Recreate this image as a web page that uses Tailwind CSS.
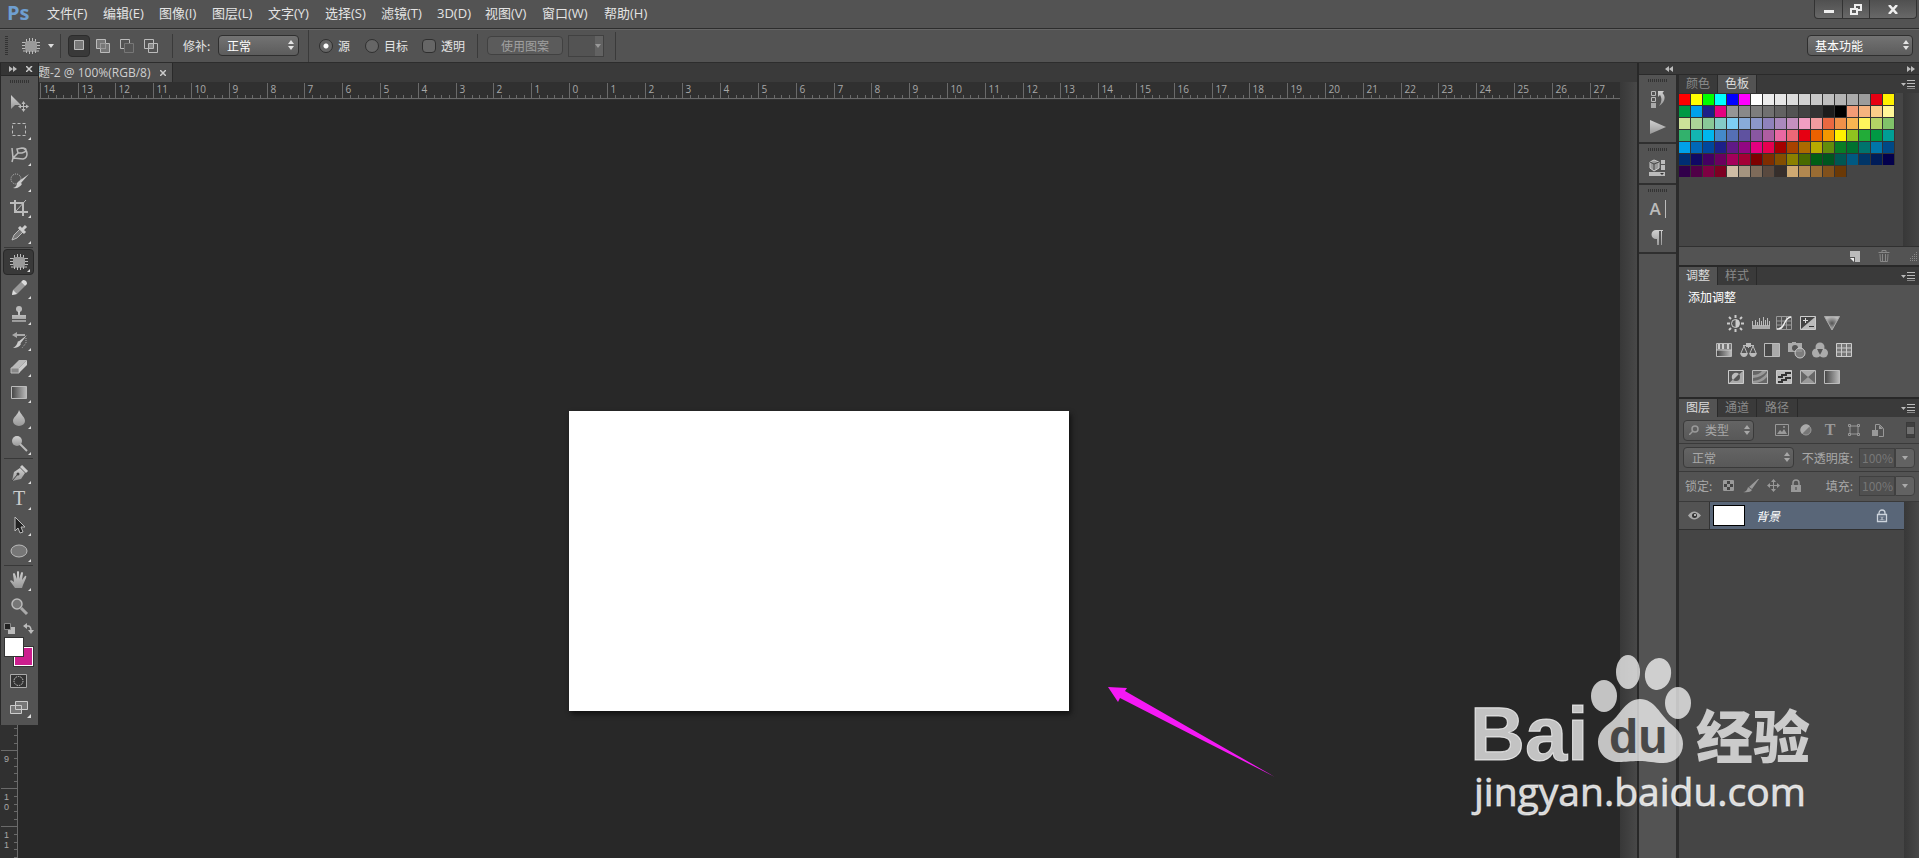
<!DOCTYPE html>
<html lang="zh-CN">
<head>
<meta charset="utf-8">
<title>未标题-2 @ 100%(RGB/8)</title>
<script src="https://cdn.jsdelivr.net/npm/@tailwindcss/browser@4"></script>
</head>
<body class="flex h-screen flex-col overflow-hidden bg-[#282828] font-['Open_Sans','Noto_Sans_CJK_SC',sans-serif] text-xs text-[#e4e4e4]">
<svg width="0" height="0" class="absolute" aria-hidden="true">
  <defs>
    <linearGradient id="g" x1="0" y1="0" x2="0" y2="1"><stop offset="0" stop-color="#d0d0d0"/><stop offset="1" stop-color="#989898"/></linearGradient>
    <linearGradient id="gh" x1="0" y1="0" x2="1" y2="0"><stop offset="0" stop-color="#444"/><stop offset="1" stop-color="#bbb"/></linearGradient>
    <radialGradient id="gr"><stop offset="0" stop-color="#555"/><stop offset="1" stop-color="#bbb"/></radialGradient>
    <pattern id="grip" width="2" height="4" patternUnits="userSpaceOnUse"><path d="M0 0h1v4h-1z" fill="#333"/></pattern>
    <symbol id="updown" viewBox="0 0 6 10"><path d="M0 4 3 0l3 4zM0 6l3 4 3-4z" fill="currentColor"/></symbol>
    <symbol id="menu" viewBox="0 0 14 9"><path d="M0 3h5L2.500 6z" fill="#bbb"/><path d="M6 .5h8M6 3.500h8M6 6.500h8" stroke="#bbb"/><path d="M6 8.500h8" stroke="#888"/></symbol>
    <symbol id="patch" viewBox="0 0 18 16"><path d="M4.500 1v14M7.500 0v16M10.500 0v16M13.500 1v14M0 4.500h18M0 7.500h18M0 10.500h18M1 13h16" stroke="#bbb"/><rect x="3" y="3" width="12" height="10" rx="3" fill="#999"/></symbol>
    <symbol id="corner" viewBox="0 0 4 4"><path d="M4 0v4H0z" fill="#ddd"/></symbol>
    <symbol id="lock" viewBox="0 0 12 14"><path d="M3 6V4a3 3 0 0 1 6 0v2" fill="none" stroke="currentColor" stroke-width="1.500"/><path d="M1 6h10v7H1z" fill="currentColor"/><path d="M5.500 8h1v3h-1z" fill="#444"/></symbol>
    <symbol id="lock-outline" viewBox="0 0 12 14"><path d="M3 5.500V4a3 3 0 0 1 6 0v1.500M1.500 5.500h9v7h-9z" fill="none" stroke="currentColor" stroke-width="1.300"/><path d="M3.500 8h5M3.500 10.500h5" stroke="currentColor" stroke-opacity=".4"/><path d="M5.500 8h1v3h-1z" fill="currentColor"/></symbol>
  </defs>
</svg>

<header class="flex h-7 shrink-0 items-stretch bg-[#535353] pl-[7px]">
  <div class="w-[40px] text-[20px] leading-[26px] font-bold text-[#6f9fd0]">Ps</div>
  <nav class="flex items-center gap-4 text-[13px] whitespace-nowrap">
    <button class="w-10 text-left">文件(F)</button><button class="w-10 text-left">编辑(E)</button><button class="w-[37px] text-left">图像(I)</button><button class="w-10 text-left">图层(L)</button><button class="w-[41px] text-left">文字(Y)</button><button class="w-10 text-left">选择(S)</button><button class="w-10 text-left">滤镜(T)</button><button class="w-8 text-left">3D(D)</button><button class="w-[41px] text-left">视图(V)</button><button class="w-[46px] text-left">窗口(W)</button><button class="w-11 text-left">帮助(H)</button>
  </nav>
  <div class="mr-[2px] ml-auto flex h-[19px] divide-x divide-[#333] rounded-b-sm border border-t-0 border-[#333] bg-linear-to-b from-[#505050] to-[#686868]">
    <button aria-label="最小化" class="flex w-[28px] items-center justify-center"><svg width="10" height="10"><path d="M0 6h10v3H0z" fill="#eee"/></svg></button>
    <button aria-label="还原" class="flex w-[27px] items-center justify-center"><svg width="12" height="11" fill="none" stroke="#eee" stroke-width="2"><path d="M5 4V1h6v5H8"/><path d="M1 5h6v5H1z"/></svg></button>
    <button aria-label="关闭" class="flex w-[46px] items-center justify-center"><svg width="10" height="9"><path d="m1 0 8 9M9 0 1 9" stroke="#eee" stroke-width="2.500"/></svg></button>
  </div>
</header>

<section class="flex h-[35px] shrink-0 items-center border-t border-b border-t-[#2d2d2d] border-b-[#2d2d2d] bg-[#535353] pl-[5px] font-['Noto_Sans_CJK_SC',sans-serif] shadow-[inset_0_1px_0_#666]">
  <svg width="3" height="20"><path d="M1.500 0v20" stroke="#333" stroke-width="3" stroke-dasharray="1 1"/></svg>
  <button aria-label="修补工具" class="ml-[14px] flex items-center gap-2"><svg width="18" height="16"><use href="#patch"/></svg><svg width="6" height="4"><path d="M0 0h6L3 4z" fill="#ddd"/></svg></button>
  <i class="ml-[6px] h-6 w-px bg-[#3a3a3a]"></i>
  <div class="ml-[7px] flex items-center">
    <button aria-label="新选区" class="flex h-[22px] w-[22px] items-center justify-center rounded-sm border border-[#2c2c2c] bg-[#393939]"><svg width="11" height="11"><path d="M.5.5h9v9h-9z" fill="#777" stroke="#bbb"/></svg></button>
    <button aria-label="添加到选区" class="ml-[6px]"><svg width="14" height="14"><path d="M.5.5h9v9h-9zM4.500 4.500h9v9h-9z" fill="#777" stroke="#bbb"/><path d="M4.500 9.500v-5h5v5z" fill="none" stroke="#999"/></svg></button>
    <button aria-label="从选区减去" class="ml-[10px]"><svg width="14" height="14"><path d="M4.500 4.500h9v9h-9z" fill="#555" stroke="#777"/><path d="M4 9.500H.5v-9h9V4" fill="none" stroke="#bbb"/></svg></button>
    <button aria-label="与选区交叉" class="ml-[10px]"><svg width="14" height="14"><path d="M5 5h4v4H5z" fill="#888"/><path d="M.5.500h9v9h-9zM4.500 4.500h9v9h-9z" fill="none" stroke="#bbb"/></svg></button>
  </div>
  <i class="ml-[14px] h-6 w-px bg-[#3a3a3a]"></i>
  <label for="patch-mode" class="ml-[10px] w-[35px]">修补:</label>
  <div class="relative"><select id="patch-mode" class="h-[21px] w-[81px] appearance-none rounded-sm border border-[#2f2f2f] bg-linear-to-b from-[#737373] to-[#5c5c5c] pl-2 text-xs leading-4 text-white"><option>正常</option></select><svg class="pointer-events-none absolute top-[5px] right-[5px]" width="6" height="10"><use href="#updown"/></svg></div>
  <i class="ml-[9px] h-8 w-px bg-[#3a3a3a]"></i>
  <label class="ml-[10px] flex items-center gap-[5px]"><input type="radio" name="patch" checked class="h-[14px] w-[14px] appearance-none rounded-full border border-[#2f2f2f] bg-[radial-gradient(circle,#fff_2px,#666_3px)]">源</label>
  <label class="ml-[15px] flex items-center gap-[5px]"><input type="radio" name="patch" class="h-[14px] w-[14px] appearance-none rounded-full border border-[#2f2f2f] bg-[#666]">目标</label>
  <label class="ml-[14px] flex items-center gap-[5px]"><input type="checkbox" class="h-[14px] w-[14px] appearance-none rounded-sm border border-[#2f2f2f] bg-[#666]">透明</label>
  <i class="ml-[12px] h-6 w-px bg-[#3a3a3a]"></i>
  <button disabled class="ml-[9px] h-[19px] w-[76px] rounded-sm border border-[#414141] bg-[#5b5b5b] leading-4 text-[#a0a0a0]">使用图案</button>
  <button disabled aria-label="图案" class="ml-[5px] flex h-[22px] w-[36px] border border-[#414141]"><span class="ml-auto flex h-full w-2 items-center bg-[#626262]"><svg width="6" height="4"><path d="M0 0h6L3 4z" fill="#999"/></svg></span></button>
  <i class="ml-[11px] h-7 w-px bg-[#3a3a3a]"></i>
  <div class="relative mr-[6px] ml-auto"><select aria-label="工作区" class="h-[21px] w-[106px] appearance-none rounded-sm border border-[#2f2f2f] bg-linear-to-b from-[#737373] to-[#5c5c5c] pl-[7px] text-xs leading-4 text-white"><option>基本功能</option></select><svg class="pointer-events-none absolute top-[5px] right-[4px]" width="6" height="10"><use href="#updown"/></svg></div>
</section>

<main class="relative flex min-h-0 flex-1">
  <section class="flex min-w-0 flex-1 flex-col">
    <div class="flex h-[19px] shrink-0 bg-[#3a3a3a] pl-[38px]">
      <div class="flex h-[19px] w-[135px] items-center justify-between overflow-hidden border-r border-[#2a2a2a] bg-[#4f4f4f] pr-[6px] leading-[19px] whitespace-nowrap text-[#cfcfcf]"><span>题-2 @ 100%(RGB/8)</span><button aria-label="关闭文档"><svg width="6" height="6"><path d="m0 0 6 6M6 0 0 6" stroke="#ccc" stroke-width="1.500"/></svg></button></div>
    </div>
    <div class="flex min-h-0 flex-1">
      <div class="flex min-w-0 flex-1 flex-col">
        <svg id="hruler" class="h-[18px] w-full shrink-0 bg-[#303030]"></svg>
        <div class="relative min-h-0 flex-1">
          <svg id="vruler" class="h-full w-[18px] bg-[#303030]"></svg>
          <div class="absolute top-[311px] left-[569px] h-[300px] w-[500px] bg-white shadow-[2px_3px_5px_#111]"></div>
          <svg class="absolute top-[586px] left-[1107px]" width="170" height="92" role="img" aria-label="箭头"><path d="M1 1 20 2 18 5 168 91 95 54 13 12 11 16z" fill="#f519f5"/></svg>
        </div>
      </div>
      <div class="w-[17px] bg-linear-to-r from-[#383838] to-[#484848]"></div>
    </div>
  </section>

  <aside class="flex w-[282px] shrink-0 flex-col border-l-2 border-[#282828] bg-[#3a3a3a]">
    <div class="flex h-3 shrink-0 items-center justify-between border-b border-[#2a2a2a] pr-1 pl-[26px]">
      <svg width="8" height="6"><path d="M4 0v6L0 3zM8 0v6L4 3z" fill="#bbb"/></svg><svg width="8" height="6"><path d="M0 0v6l4-3zM4 0v6l4-3z" fill="#bbb"/></svg>
    </div>
    <div class="flex min-h-0 flex-1">
      <div class="flex w-[40px] shrink-0 flex-col items-stretch border-r-3 border-[#2b2b2b] bg-[#535353]">
        <div class="flex h-[69px] flex-col items-center border-b-2 border-[#2f2f2f] pt-1">
          <svg width="20" height="4"><rect width="20" height="3" fill="url(#grip)"/></svg>
          <button aria-label="历史记录" class="mt-[7px]"><svg width="16" height="18"><path d="M1.500 1.500h4v4h-4zM1.500 7.500h4v4h-4z" fill="none" stroke="#bbb"/><path d="M1 13h5v5H1z" fill="#aaa"/><path d="M8 1h6l-1.500 2c4 4 2 10-3.500 13 3-4 3-8 1-11L8 7z" fill="url(#g)"/></svg></button>
          <button aria-label="动作" class="mt-3"><svg width="16" height="14"><path d="m0 0 16 7-16 7z" fill="url(#g)"/></svg></button>
        </div>
        <div class="flex h-[41px] flex-col items-center border-b-2 border-[#2f2f2f] pt-1">
          <svg width="20" height="4"><rect width="20" height="3" fill="url(#grip)"/></svg>
          <button aria-label="3D 属性" class="mt-[7px]"><svg width="17" height="18"><path d="m1 3 4-2 5 2v6l-5 3-4-3z" fill="#999" stroke="#ccc"/><path d="m1 3 4 2 5-2M5 5v6" fill="none" stroke="#444"/><path d="M12 1h4v4h-4zM12 6h4v5h-4zM0 13h16v4H0z" fill="#bbb"/><path d="M11 14h4l-2 2z" fill="#333"/></svg></button>
        </div>
        <div class="flex h-[69px] flex-col items-center border-b-2 border-[#2f2f2f] pt-1">
          <svg width="20" height="4"><rect width="20" height="3" fill="url(#grip)"/></svg>
          <button aria-label="字符" class="mt-[7px] flex items-center border-[#bbb] text-[17px] leading-[18px] font-semibold text-[#bbb]">A<i class="ml-1 h-[18px] w-px bg-[#bbb]"></i></button>
          <button aria-label="段落" class="mt-3"><svg width="14" height="15"><path d="M5 0h7v1h-1v14h-1V1H8v14H6V9H5a4.500 4.500 0 0 1 0-9z" fill="url(#g)"/></svg></button>
        </div>
      </div>

      <div class="flex min-w-0 flex-1 flex-col font-['Noto_Sans_CJK_SC',sans-serif]">
        <section class="flex h-[192px] shrink-0 flex-col border-b-2 border-[#282828]">
          <div class="flex h-[18px] shrink-0 items-stretch pr-1 leading-4 text-[#8a8a8a]">
            <button class="w-[39px] border-r border-[#2a2a2a] pb-[2px]">颜色</button><button class="w-[39px] border-r border-[#2a2a2a] bg-[#535353] pb-[2px] text-[#ddd]">色板</button>
            <button aria-label="面板菜单" class="ml-auto"><svg width="14" height="9"><use href="#menu"/></svg></button>
          </div>
          <div class="flex min-h-0 flex-1">
            <div id="swatches" class="grid flex-1 auto-rows-[12px] grid-cols-[repeat(18,12px)] bg-[#454545]"></div>
            <div class="w-4 bg-linear-to-r from-[#383838] to-[#444]"></div>
          </div>
          <div class="flex h-[19px] shrink-0 items-center justify-end gap-[18px] border-t border-[#303030] bg-[#535353] pr-[2px]">
            <button aria-label="新建色板"><svg width="10" height="11"><path d="M0 0h10v11H5V6H0z" fill="#bbb"/><path d="M0 7h4v4z" fill="#eee"/></svg></button>
            <button aria-label="删除色板"><svg width="12" height="12" fill="none" stroke="#888"><path d="M.5 2.500h11M4 2V.5h4V2M2 4l.5 7.500h7L10 4M4.500 4v7M7.500 4v7"/></svg></button>
            <svg width="9" height="9"><path d="M8.500 0v9M6.500 2v7M4.500 4v5M2.500 6v3" stroke="#888" stroke-dasharray="1 1"/></svg>
          </div>
        </section>

        <section class="flex h-[132px] shrink-0 flex-col border-b-2 border-[#282828] bg-[#535353]">
          <div class="flex h-[18px] shrink-0 items-stretch bg-[#3a3a3a] pr-1 leading-4 text-[#8a8a8a]">
            <button class="w-[39px] border-r border-[#2a2a2a] bg-[#535353] pb-[2px] text-[#ddd]">调整</button><button class="w-[39px] border-r border-[#2a2a2a] pb-[2px]">样式</button>
            <button aria-label="面板菜单" class="ml-auto"><svg width="14" height="9"><use href="#menu"/></svg></button>
          </div>
          <h2 class="mt-[3px] pl-[9px] leading-[18px] text-white">添加调整</h2>
          <div class="mt-2 ml-[48px] flex h-[18px] items-center gap-2">
            <button aria-label="亮度/对比度"><svg width="17" height="17"><g stroke="#ccc" stroke-width="2"><path d="M8.500 0v3M8.500 14v3M0 8.500h3M14 8.500h3M2 2l2 2M13 13l2 2M2 15l2-2M13 4l2-2"/></g><circle cx="8.500" cy="8.500" r="4" fill="#555" stroke="#ccc"/><path d="M8.500 4.500a4 4 0 0 1 0 8z" fill="#ccc"/></svg></button>
            <button aria-label="色阶"><svg width="18" height="16"><path d="M0 10h18v4H0z" fill="#aaa"/><path d="M.5 6v5M3.500 5v6M5.500 7v4M7.500 3v8M9.500 6v5M11.500 2v9M13.500 5v6M15.500 3v8M17.500 6v5" stroke="#bbb"/></svg></button>
            <button aria-label="曲线" class="-ml-[2px]"><svg width="16" height="16" fill="none"><path d="M.5 1.500h15v13H.5zM5.500 2v12M10.500 2v12M1 6h14M1 10h14" stroke="#999"/><path d="M1 14c9 0 6-11 14-12" stroke="#eee" stroke-width="1.500"/></svg></button>
            <button aria-label="曝光度"><svg width="16" height="16"><path d="M.5 1.500h15v13H.5z" fill="#bbb" stroke="#ccc"/><path d="M1 14V2h14z" fill="#444"/><path d="M3 5.500h5M5.500 3v5" stroke="#ddd"/><path d="M9 11.500h5" stroke="#333"/></svg></button>
            <button aria-label="自然饱和度"><svg width="16" height="16"><path d="M.5 1.500h15L8 15z" fill="url(#gr)" stroke="#aaa"/></svg></button>
          </div>
          <div class="mt-[9px] ml-[37px] flex h-[18px] items-center gap-2">
            <button aria-label="色相/饱和度"><svg width="16" height="16"><path d="M.5 1.500h15v13H.5z" fill="#777" stroke="#bbb"/><path d="M3 2v5M7 2v5M12 2v5" stroke="#ccc" stroke-width="2"/><path d="M1 8h14v6H1z" fill="url(#gh)"/><path d="M0 8h16" stroke="#ccc"/></svg></button>
            <button aria-label="色彩平衡"><svg width="17" height="16"><path d="M8.500 1v5M3 3.500h11M4 4l-3 7M4 4l3 7M13 4l-3 7M13 4l3 7" fill="none" stroke="#bbb"/><path d="M0 11h8q-1 4-4 4t-4-4zM9 11h8q-1 4-4 4t-4-4zM6 1h5v4H6z" fill="#bbb"/></svg></button>
            <button aria-label="黑白" class="-ml-[1px]"><svg width="16" height="16"><path d="M.5 1.500h15v13H.5z" fill="#aaa" stroke="#bbb"/><path d="M1 2h7v12H1z" fill="#484848"/></svg></button>
            <button aria-label="照片滤镜"><svg width="18" height="17"><path d="M0 1h4V0h4v1h6v9H0z" fill="#aaa"/><circle cx="7" cy="6" r="3" fill="#555"/><circle cx="12" cy="11" r="5" fill="#888" fill-opacity=".8" stroke="#ccc"/></svg></button>
            <button aria-label="通道混合器" class="-ml-[2px]"><svg width="16" height="16" fill="#bbb" fill-opacity=".85"><circle cx="8" cy="5" r="4.500"/><circle cx="4.500" cy="11" r="4.500"/><circle cx="11.500" cy="11" r="4.500"/><path d="M5 7h6l-3 6z" fill="#444"/></svg></button>
            <button aria-label="颜色查找"><svg width="16" height="16"><path d="M.5 1.500h15v13H.5z" fill="#777" stroke="#ccc"/><path d="M5.500 2v12M10.500 2v12M1 6h14M1 10h14" stroke="#ccc"/></svg></button>
          </div>
          <div class="mt-[9px] ml-[49px] flex h-[18px] items-center gap-2">
            <button aria-label="反相"><svg width="16" height="16"><path d="M.5 1.500h15v13H.5z" fill="#aaa" stroke="#ccc"/><path d="M1 14V2h14z" fill="#555"/><circle cx="8" cy="8" r="4" fill="#555"/><path d="M5 11a4 4 0 0 1 6-6z" fill="#bbb"/></svg></button>
            <button aria-label="色调分离"><svg width="16" height="16"><path d="M.5 1.500h15v13H.5z" fill="#666" stroke="#bbb"/><path d="M1 6q6 0 9-4h5Q10 8 1 9zM1 12q9-1 14-8v4q-5 6-14 6z" fill="#999"/></svg></button>
            <button aria-label="阈值"><svg width="16" height="16"><path d="M.5 1.500h15v13H.5z" fill="#bbb" stroke="#ccc"/><path d="M2 7h3V5h4V3h6v2h-4v2H7v2H2zM2 12h3v-2h4V8h6v2h-4v2H7v2H2z" fill="#333"/></svg></button>
            <button aria-label="可选颜色"><svg width="16" height="16"><path d="M.5 1.500h15v13H.5z" fill="#666" stroke="#bbb"/><path d="m1 2 7 6 7-6z" fill="#aaa"/><path d="m1 14 7-6 7 6z" fill="#999"/></svg></button>
            <button aria-label="渐变映射"><svg width="16" height="16"><path d="M.5 1.500h15v13H.5z" fill="url(#gh)" stroke="#bbb"/></svg></button>
          </div>
        </section>

        <section class="flex min-h-0 flex-1 flex-col text-[#a8a8a8]">
          <div class="flex h-[18px] shrink-0 items-stretch pr-1 leading-4 text-[#8a8a8a]">
            <button class="w-[39px] border-r border-[#2a2a2a] bg-[#535353] pb-[2px] text-[#ddd]">图层</button><button class="w-[39px] border-r border-[#2a2a2a] pb-[2px]">通道</button><button class="w-[41px] border-r border-[#2a2a2a] pb-[2px]">路径</button>
            <button aria-label="面板菜单" class="ml-auto"><svg width="14" height="9"><use href="#menu"/></svg></button>
          </div>
          <div class="flex h-[27px] shrink-0 items-center border-b border-[#3a3a3a] bg-[#535353] pr-1 pl-1">
            <div class="relative"><select aria-label="滤镜类型" class="h-[21px] w-[71px] appearance-none rounded-sm border border-[#3a3a3a] bg-linear-to-b from-[#646464] to-[#585858] pl-[21px] leading-4"><option>类型</option></select><svg class="pointer-events-none absolute top-[5px] left-[6px]" width="10" height="10" fill="none" stroke="#999" stroke-width="1.500"><circle cx="6" cy="4" r="3"/><path d="M4 6 0 10"/></svg><svg class="pointer-events-none absolute top-[5px] right-[4px]" width="6" height="10"><use href="#updown"/></svg></div>
            <button aria-label="像素图层" class="ml-[21px]"><svg width="14" height="12"><path d="M.5.500h13v11H.5z" fill="none" stroke="#999"/><path d="m2 10 3-4 2 2 2-3 3 5z" fill="#999"/><circle cx="9" cy="3" r="1" fill="#999"/></svg></button>
            <button aria-label="调整图层" class="ml-[11px]"><svg width="12" height="12"><circle cx="6" cy="6" r="5" fill="#777" stroke="#999"/><path d="M2 10 10 2A5.500 5.500 0 0 0 2 10z" fill="#aaa"/></svg></button>
            <button aria-label="文字图层" class="ml-3 w-3 font-['Liberation_Serif',serif] text-[16px] leading-4 font-bold text-[#999]">T</button>
            <button aria-label="形状图层" class="ml-3"><svg width="12" height="12" fill="none" stroke="#999"><path d="M2 2h8v8H2z"/><path d="M.5.500h2v2h-2zM9.500.500h2v2h-2zM.5 9.500h2v2h-2zM9.500 9.500h2v2h-2z" fill="#555"/></svg></button>
            <button aria-label="智能对象" class="ml-3"><svg width="12" height="13"><path d="M3.500 6V.5h4l4 4v8H7" fill="none" stroke="#999"/><path d="M0 6h6v6H0zM7 1v4h4z" fill="#999"/></svg></button>
            <button aria-label="滤镜开关" class="ml-auto h-4 w-[9px] border border-[#3a3a3a] bg-[#404040]"><span class="block h-[7px] bg-[#707070]"></span></button>
          </div>
          <div class="flex h-[28px] shrink-0 items-center border-b border-[#3a3a3a] bg-[#535353] pr-1 pl-1">
            <div class="relative"><select aria-label="混合模式" class="h-[21px] w-[111px] appearance-none rounded-sm border border-[#3a3a3a] bg-linear-to-b from-[#646464] to-[#585858] pl-2 leading-4"><option>正常</option></select><svg class="pointer-events-none absolute top-[5px] right-[4px]" width="6" height="10"><use href="#updown"/></svg></div>
            <label for="opacity" class="ml-auto pr-[6px]">不透明度:</label>
            <input id="opacity" value="100%" class="h-5 w-[36px] border border-[#404040] bg-[#505050] pl-[2px] text-[#777]"><button aria-label="不透明度滑块" class="flex h-5 w-5 items-center justify-center rounded-r-sm border border-[#404040] bg-[#626262]"><svg width="6" height="4"><path d="M0 0h6L3 4z" fill="#aaa"/></svg></button>
          </div>
          <div class="flex h-[30px] shrink-0 items-center border-b border-[#3a3a3a] bg-[#535353] pr-1 pb-[2px] pl-[6px]">
            <span>锁定:</span>
            <button aria-label="锁定透明像素" class="ml-[11px]"><svg width="11" height="11"><path d="M.5.500h10v10H.5z" fill="#444" stroke="#999"/><path d="M1 1h3v3H1zM7 1h3v3H7zM4 4h3v3H4zM1 7h3v3H1zM7 7h3v3H7z" fill="#999"/></svg></button>
            <button aria-label="锁定图像像素" class="ml-[9px]"><svg width="16" height="14"><path d="M15 0h1L9 10 6 8zM5 8l4 3q-2 3-9 2 4 0 5-5z" fill="#999"/></svg></button>
            <button aria-label="锁定位置" class="ml-[8px]"><svg width="13" height="13"><path d="M6.500 2v9M2 6.500h9" stroke="#999"/><path d="m6.500 0 2.500 3H4zM6.500 13 4 10h5zM0 6.500 3 4v5zM13 6.500 10 4v5z" fill="#999"/></svg></button>
            <button aria-label="锁定全部" class="ml-[10px] text-[#999]"><svg width="12" height="14"><use href="#lock"/></svg></button>
            <label for="fill" class="ml-auto pr-[6px]">填充:</label>
            <input id="fill" value="100%" class="h-5 w-[36px] border border-[#404040] bg-[#505050] pl-[2px] text-[#777]"><button aria-label="填充滑块" class="flex h-5 w-5 items-center justify-center rounded-r-sm border border-[#404040] bg-[#626262]"><svg width="6" height="4"><path d="M0 0h6L3 4z" fill="#aaa"/></svg></button>
          </div>
          <div class="flex min-h-0 flex-1">
            <div class="flex-1 bg-[#454545]">
              <div class="flex h-7 items-stretch border-b border-[#303030] bg-[#596678]">
                <button aria-label="可见性" class="flex w-[31px] items-center justify-center border-r border-[#333] bg-[#535353]"><svg width="13" height="9"><path d="M0 4.500q6-8 13 0-7 8-13 0z" fill="#aaa"/><circle cx="6.500" cy="4.500" r="2.500" fill="#333"/><circle cx="7" cy="4" r="1" fill="#ddd"/></svg></button>
                <span class="my-[3px] ml-[3px] w-8 border border-black bg-white"></span>
                <span class="ml-[11px] self-center text-white italic">背景</span>
                <svg class="mr-4 ml-auto self-center text-[#ccd3dc]" width="12" height="14"><use href="#lock-outline"/></svg>
              </div>
            </div>
            <div class="w-[15px] bg-linear-to-r from-[#383838] to-[#484848]"></div>
          </div>
        </section>
      </div>
    </div>
  </aside>

  <aside class="absolute top-0 left-0 flex h-[662px] w-[39px] flex-col border-r border-l border-[#282828] bg-[#535353]" aria-label="工具箱">
    <div class="flex h-[13px] shrink-0 items-center justify-between border-b border-[#282828] bg-[#353535] pr-[5px] pl-2"><svg width="8" height="6"><path d="M0 0v6l4-3zM4 0v6l4-3z" fill="#bbb"/></svg><svg width="7" height="6"><path d="m0 0 6 6M6 0 0 6" stroke="#ccc" stroke-width="1.500"/></svg></div>
    <div class="flex h-[14px] shrink-0 justify-center pt-1"><svg width="20" height="3"><rect width="20" height="3" fill="url(#grip)"/></svg></div>
    <div id="tools" class="flex flex-col items-center pr-[2px]"></div>
    <div class="flex h-[18px] items-center gap-2 pl-[3px]"><button aria-label="默认颜色"><svg width="11" height="11"><path d="M4 4h7v7H4z" fill="#bbb"/><path d="M.5.500h6v6h-6z" fill="#222" stroke="#888"/></svg></button><button aria-label="切换颜色"><svg width="11" height="11" fill="none" stroke="#bbb"><path d="M2 3h3q3 0 3 5" stroke-width="1.500"/><path d="M4 0 0 3l4 3zM5 7h6l-3 4z" fill="#bbb" stroke="none"/></svg></button></div>
    <div class="relative h-[31px]"><button aria-label="背景色" class="absolute top-[10px] left-[13px] h-[19px] w-[19px] border border-white bg-[#cc1e8e] outline outline-[#333]"></button><button aria-label="前景色" class="absolute top-0 left-[3px] h-5 w-5 border border-[#333] bg-white"></button></div>
    <button aria-label="快速蒙版" class="flex h-[26px] items-center justify-center pr-[2px]"><svg width="17" height="14"><path d="M.5.500h16v13H.5z" fill="#333" stroke="#aaa"/><circle cx="8.500" cy="7" r="4.500" fill="none" stroke="#ccc" stroke-dasharray="1.500 1"/></svg></button>
    <button aria-label="屏幕模式" class="relative flex h-[28px] items-center justify-center pr-[2px]"><svg width="18" height="14"><path d="M.5 4.500h11v8H.5zM5.500.500h12v8h-12z" fill="#777" stroke="#ccc"/></svg><svg class="absolute right-[7px] bottom-1" width="4" height="4"><use href="#corner"/></svg></button>
  </aside>

  <svg class="pointer-events-none absolute right-[100px] bottom-[30px]" width="350" height="176" fill="#fff" role="img" aria-label="Baidu 经验">
    <g fill-opacity=".72">
      <text x="1" y="108" font-family="Liberation Sans" font-weight="700" font-size="76" stroke="#fff" stroke-opacity=".72">Bai</text>
      <ellipse cx="135" cy="44" rx="13" ry="16"/><ellipse cx="159" cy="20" rx="12" ry="17"/><ellipse cx="189" cy="22" rx="13" ry="16" transform="rotate(12 189 22)"/><ellipse cx="209" cy="51" rx="13" ry="16"/>
      <path d="M171 47c15 0 20 16 31 25 7 6 12 11 12 20 0 12-9 19-20 19-9 0-15-2-24-2s-13 1-20 1c-12 0-21-8-21-20 0-9 6-15 13-20 10-8 15-23 29-23z"/>
      <text x="227" y="106" font-family="Noto Sans CJK SC" font-weight="900" font-size="57">经验</text>
    </g>
    <text x="140" y="101" font-family="Liberation Sans" font-weight="700" font-size="48" fill="#484848">du</text>
    <text x="5" y="154" font-family="Open Sans" font-weight="500" font-size="39" fill-opacity=".82" stroke="#fff" stroke-opacity=".6">jingyan.baidu.com</text>
  </svg>
</main>

<script>
const tools = [
 ['移动','<path d="M2 2v14l4-4h6z" fill="url(#g)"/><path d="M14.500 9v9M10 13.500h9" stroke="#bbb"/><path d="m14.500 8 2 3h-4zM14.500 19l-2-3h4zM9 13.500l3-2v4zM20 13.500l-3-2v4z" fill="#bbb"/>'],
 ['矩形选框','<path d="M3.500 4.500h13v12h-13z" fill="none" stroke="#bbb" stroke-dasharray="3 2"/>'],
 ['磁性套索','<path d="M3 3l1 10 5-5h4q4-1 4-3t-4-2l-5 1 1 4M4 13l10 1q4-1 4-5t-4-6M4 13l-1 4" fill="none" stroke="#bbb" stroke-width="1.500"/>'],
 ['快速选择','<circle cx="7" cy="8" r="5" fill="none" stroke="#bbb" stroke-dasharray="1 1"/><path d="M20 3 12 12l-2-2zM10 10l3 3q-3 5-9 4 4-1 4-5z" fill="#ccc"/>'],
 ['裁剪','<path d="M6 3v12h13M1 6h13v13" fill="none" stroke="#bbb" stroke-width="2"/><path d="m7 14 10-11" stroke="#bbb"/>'],
 ['吸管','<path d="m3 17 2-5 6-6 3 3-6 6z" fill="#777" stroke="#bbb"/><path d="m10 4 6 6M13 7l4-4" stroke="#ccc" stroke-width="3"/>'],
 null,
 ['修补','<use href="#patch" x="1" y="2" width="18" height="16"/>'],
 ['铅笔','<path d="m3 17 1-5 8-8 4 4-8 8z" fill="#999"/><path d="m12 4 2-2q4 0 4 4l-2 2z" fill="#ddd"/><path d="m3 17 1-5 4 4z" fill="#ddd"/>'],
 ['仿制图章','<circle cx="10" cy="5" r="3" fill="#bbb"/><path d="M9 7h2v4h6v4H3v-4h6zM3 16h14v2H3z" fill="url(#g)"/>'],
 ['历史记录画笔','<path d="m3 5 5-3v2h8v2H8v2z" fill="#aaa"/><path d="m18 5-7 9-2-2zM9 11l3 3q-2 4-8 4 4-2 5-7z" fill="#ccc"/><path d="M17 8v5l-4 5" fill="none" stroke="#aaa" stroke-dasharray="1 1"/>'],
 ['橡皮擦','<path d="m2 12 8-8h8l-8 8z" fill="#bbb"/><path d="M2 12h8v5H2z" fill="#888" stroke="#bbb"/><path d="m10 12 8-8v5l-8 8z" fill="#ccc"/>'],
 ['渐变','<path d="M2.500 4.500h15v12h-15z" fill="url(#gh)" stroke="#bbb"/>'],
 ['模糊','<path d="M10 2c2 5 6 7 6 11a6 5 0 0 1-12 0c0-4 5-6 6-11z" fill="url(#g)"/>'],
 ['减淡','<circle cx="8" cy="7" r="5" fill="url(#g)"/><path d="m11 10 7 7" stroke="#bbb" stroke-width="2"/>'],
 null,
 ['钢笔','<path d="m3 18 2-9 6-4 5 5-4 6z" fill="url(#g)"/><path d="m3 18 6-7" stroke="#444"/><circle cx="9" cy="11" r="1.500" fill="#444"/><path d="m12 3 6 6" stroke="#ccc" stroke-width="3"/>'],
 ['文字','<text x="4" y="16" font-family="Liberation Serif" font-size="20" fill="#ccc">T</text>'],
 ['路径选择','<path d="M6 2v14l3-3 2 5 3-1-2-5h4z" fill="#222" stroke="#bbb"/>'],
 ['椭圆','<ellipse cx="10" cy="10" rx="8" ry="6" fill="#777" stroke="#bbb"/>'],
 null,
 ['抓手','<path d="M6 18 1 11q1-2 4 1L4 4q1-2 2 0l2 5V2q1-2 2 0v7l2-6q1-2 2 0l-1 7 3-4q2-1 1 2l-3 7-1 3z" fill="url(#g)"/>'],
 ['缩放','<circle cx="8" cy="8" r="5" fill="#777" stroke="#bbb" stroke-width="1.500"/><path d="m12 12 6 6" stroke="#aaa" stroke-width="3"/>']
];
document.getElementById('tools').innerHTML = tools.map(t => t === null
  ? '<i class="flex h-[3px] w-[29px] items-center"><b class="h-px w-full bg-[#383838]"></b></i>'
  : `<button aria-label="${t[0]}" class="${t[0] === '修补' ? 'relative flex h-[26px] w-[31px] items-center justify-center rounded-sm border border-[#282828] bg-[#393939]' : 'relative flex h-[26px] w-[31px] items-center justify-center'}"><svg width="20" height="20" class="overflow-visible">${t[1]}</svg>${t[0] === '移动' || t[0] === '缩放' ? '' : '<svg class="absolute right-[3px] bottom-[2px]" width="3" height="3" viewBox="0 0 4 4"><use href="#corner"/></svg>'}</button>`).join('');

const colors = `ff0000 ffff00 00ff00 00ffff 0000ff ff00ff ffffff ececec e6e6e6 dcdcdc d2d2d2 c8c8c8 bebebe b4b4b4 aaaaaa 9c9c9c e60012 fff100
009944 00a0e9 1d2088 e4007f 959595 898989 7d7d7d 707070 626262 535353 434343 333333 1c1c1c 000000 f29b76 f6b37f facd89 fff799
cce198 acd598 89c997 84ccc9 7ecef4 88abda 8c97cb 8f82bc aa89bd c490bf f19ec2 f29c9f eb6841 f19149 f8b551 fff45c b3d465 80c269
32b16c 13b5b1 00b7ee 448aca 556fb5 5f52a0 8957a1 ae5da1 ea68a2 eb6877 e60012 eb6100 f39800 fff100 8fc31f 22ac38 009944 009e96
00a0e9 0068b7 00479d 1d2088 601986 920783 e4007f e5004f a40000 a84200 ac6a00 b7aa00 638c0b 097c25 007130 00736d 0075a9 004986
002e73 100964 440062 6a005f a4005b a40035 7d0000 7f2d00 834e00 8a8000 486a00 005e15 00561f 005752 005982 003567 001c58 03004c
31004a 500047 7e0043 7d0022 cfbda5 a59580 7e6b5a 59493f 362e2b cfa972 b28850 996c33 81511c 6a3906`.split(/\s+/);
document.getElementById('swatches').innerHTML = colors.map(c => `<button aria-label="#${c}" class="border-t border-r border-[#333]" style="background-color:#${c}"></button>`).join('');

const step = 37.8;
let h = '<path d="M0 16.500H4000" stroke="#6a6a6a"/>';
for (let i = -14; i <= 27; i++) {
  const x = Math.round(569 + i * step) + .5;
  h += `<path d="M${x} 1V17" stroke="#6a6a6a"/><text x="${x + 3}" y="11" font-size="10" fill="#a8a8a8">${Math.abs(i)}</text>`;
  for (let k = 1; k < 5; k++) h += `<path d="M${Math.round(x + k * step / 5) + .5} 13v3" stroke="#6a6a6a"/>`;
}
document.getElementById('hruler').innerHTML = h;
let v = '<path d="M17.500 0V2000" stroke="#6a6a6a"/>';
for (let i = 8; i <= 11; i++) {
  const y = Math.round(311 + i * step) - .5;
  v += `<path d="M1 ${y}H17" stroke="#6a6a6a"/>`;
  String(i).split('').forEach((d, n) => v += `<text x="4" y="${y + 11 + n * 10}" font-family="Liberation Sans" font-size="9" fill="#a8a8a8">${d}</text>`);
  for (let k = 1; k < 5; k++) v += `<path d="M14 ${Math.round(y + k * step / 5) + .5}h3" stroke="#6a6a6a"/>`;
}
document.getElementById('vruler').innerHTML = v;
</script>
</body>
</html>
